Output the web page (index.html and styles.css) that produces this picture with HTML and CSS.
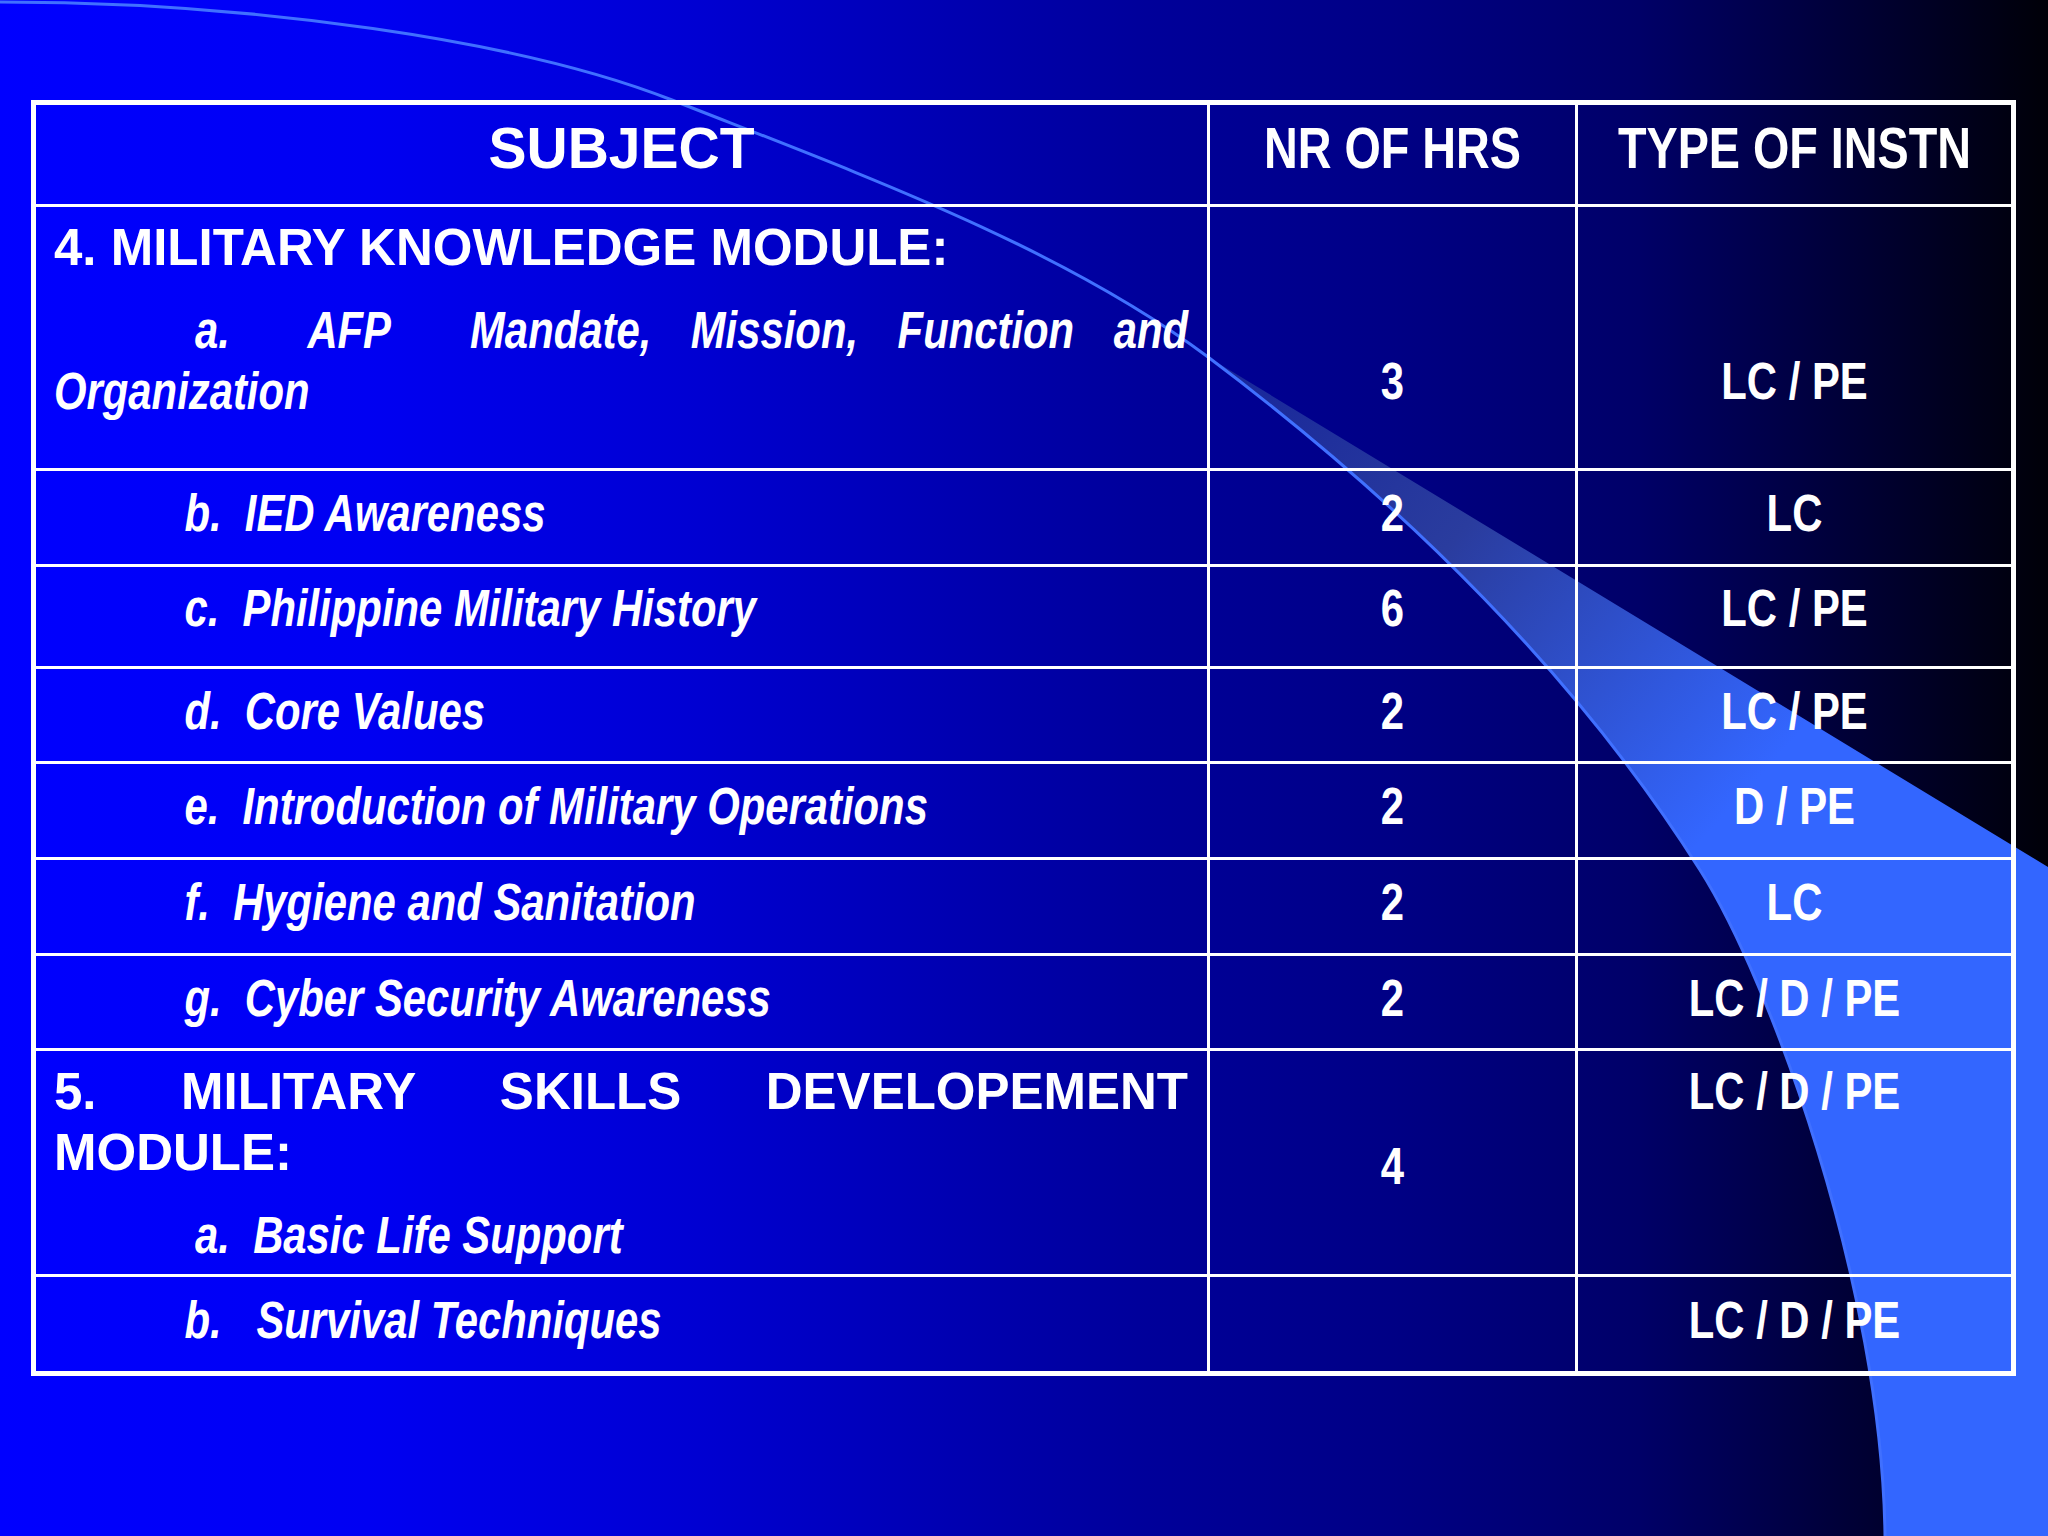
FILE: index.html
```html
<!DOCTYPE html>
<html lang="en">
<head>
<meta charset="utf-8">
<title>Military Knowledge Module</title>
<link rel="stylesheet" href="styles.css">
</head>
<body>
<div class="slide">
  <svg class="swoosh" viewBox="0 0 2048 1536" width="2048" height="1536" aria-hidden="true">
    <defs>
      <linearGradient id="bandGrad" gradientUnits="userSpaceOnUse" x1="1200" y1="350" x2="1720" y2="820">
        <stop offset="0" stop-color="#16249a"/>
        <stop offset="0.45" stop-color="#2a3c9e"/>
        <stop offset="1" stop-color="#3366ff"/>
      </linearGradient>
    </defs>
    <path d="M1208,357 L2048,867 L2048,1536 L1885,1536 C1882,1286 1770,980 1700,870 C1580,680 1408,507 1208,357 Z" fill="url(#bandGrad)"/>
    <path d="M0,2 C250,2 520,40 672,100 C852,171 1058,245 1208,357 C1408,507 1580,680 1700,870 C1770,980 1882,1286 1885,1536" fill="none" stroke="#4070ff" stroke-width="3"/>
  </svg>

  <div class="table">
    <div class="cell hd c1">SUBJECT</div>
    <div class="cell hd c2"><span class="nw">NR OF HRS</span></div>
    <div class="cell hd c3"><span class="nw">TYPE OF INSTN</span></div>

    <div class="cell c1 top">
      <p class="mod">4. MILITARY KNOWLEDGE MODULE:</p>
      <p class="sub ind-a just">a.&nbsp; AFP&nbsp; Mandate, Mission, Function and Organization</p>
    </div>
    <div class="cell c2 val low"><span class="nw">3</span></div>
    <div class="cell c3 val low"><span class="nw">LC / PE</span></div>

    <div class="cell c1 mid"><p class="sub ind-b">b.&nbsp; IED Awareness</p></div>
    <div class="cell c2 val mid"><span class="nw">2</span></div>
    <div class="cell c3 val mid"><span class="nw">LC</span></div>

    <div class="cell c1 mid hi"><p class="sub ind-b">c.&nbsp; Philippine Military History</p></div>
    <div class="cell c2 val mid hi"><span class="nw">6</span></div>
    <div class="cell c3 val mid hi"><span class="nw">LC / PE</span></div>

    <div class="cell c1 mid"><p class="sub ind-b">d.&nbsp; Core Values</p></div>
    <div class="cell c2 val mid"><span class="nw">2</span></div>
    <div class="cell c3 val mid"><span class="nw">LC / PE</span></div>

    <div class="cell c1 mid"><p class="sub ind-b">e.&nbsp; Introduction of Military Operations</p></div>
    <div class="cell c2 val mid"><span class="nw">2</span></div>
    <div class="cell c3 val mid"><span class="nw">D / PE</span></div>

    <div class="cell c1 mid"><p class="sub ind-b">f.&nbsp; Hygiene and Sanitation</p></div>
    <div class="cell c2 val mid"><span class="nw">2</span></div>
    <div class="cell c3 val mid"><span class="nw">LC</span></div>

    <div class="cell c1 mid"><p class="sub ind-b">g.&nbsp; Cyber Security Awareness</p></div>
    <div class="cell c2 val mid"><span class="nw">2</span></div>
    <div class="cell c3 val mid"><span class="nw">LC / D / PE</span></div>

    <div class="cell c1 top">
      <p class="mod just">5. MILITARY SKILLS DEVELOPEMENT MODULE:</p>
      <p class="sub ind-a">a.&nbsp; Basic Life Support</p>
    </div>
    <div class="cell c2 val ctr"><span class="nw">4</span></div>
    <div class="cell c3 val top"><span class="nw">LC / D / PE</span></div>

    <div class="cell c1 mid"><p class="sub ind-b">b.&nbsp;&nbsp; Survival Techniques</p></div>
    <div class="cell c2 val mid"></div>
    <div class="cell c3 val mid"><span class="nw">LC / D / PE</span></div>
  </div>
</div>
</body>
</html>
```

FILE: styles.css
```css
html, body {
  margin: 0;
  padding: 0;
  background: #000;
}

.slide {
  position: relative;
  width: 2048px;
  height: 1536px;
  overflow: hidden;
  box-sizing: border-box;
  padding: 100px 0 0 31px;
  background: linear-gradient(to right,
    #0000ff 0%,
    #0000f2 18%,
    #0000d2 34%,
    #0000a8 50%,
    #00009a 56%,
    #000085 68%,
    #000068 80%,
    #000038 90%,
    #000008 100%);
  font-family: "Liberation Sans", Arial, sans-serif;
  color: #ffffff;
}

.swoosh {
  position: absolute;
  left: 0;
  top: 0;
  width: 2048px;
  height: 1536px;
  z-index: 0;
}

.table {
  position: relative;
  z-index: 1;
  display: grid;
  grid-template-columns: 1174px 368px 433px;
  grid-template-rows: 102px 264px 96px 102px 95px 96px 96px 95px 226px 94px;
  width: 1975px;
  border: 5px solid #ffffff;
}

.cell {
  box-sizing: border-box;
  border-bottom: 3px solid #ffffff;
  display: flex;
  flex-direction: column;
  min-width: 0;
  overflow: hidden;
}

.cell:nth-last-child(-n+3) {
  border-bottom: none;
}

.c1, .c2 {
  border-right: 3px solid #ffffff;
}

.c1 {
  padding: 0 19px 0 18px;
}

/* Arial Narrow look: Liberation Sans compressed horizontally */
.nw {
  display: inline-block;
  transform: scaleX(0.82);
  transform-origin: 50% 50%;
  white-space: nowrap;
}

.hd {
  font-weight: bold;
  font-size: 57px;
  line-height: 66px;
  text-align: center;
  padding: 10px 0 0 0;
  justify-content: flex-start;
}

.val {
  font-weight: bold;
  font-size: 51px;
  line-height: 61px;
  text-align: center;
}

.mid {
  justify-content: center;
  padding-bottom: 8px;
}

.mid.hi {
  padding-bottom: 16px;
}

.ctr {
  justify-content: center;
  padding-top: 8px;
}

.top {
  justify-content: flex-start;
  padding-top: 10px;
}

.low {
  justify-content: flex-start;
  padding-top: 144px;
}

.mod {
  margin: 0;
  font-weight: bold;
  font-size: 51px;
  line-height: 61px;
}

.sub {
  margin: 0 -21.95% 0 0;
  width: 121.95%;
  box-sizing: border-box;
  transform: scaleX(0.82);
  transform-origin: 0 50%;
  font-weight: bold;
  font-style: italic;
  font-size: 51px;
  line-height: 61px;
  white-space: normal;
}

.mod + .sub {
  margin-top: 22px;
}

.just {
  text-align: justify;
}

.ind-a {
  text-indent: 172px;
}

.ind-b {
  text-indent: 159px;
}
```
